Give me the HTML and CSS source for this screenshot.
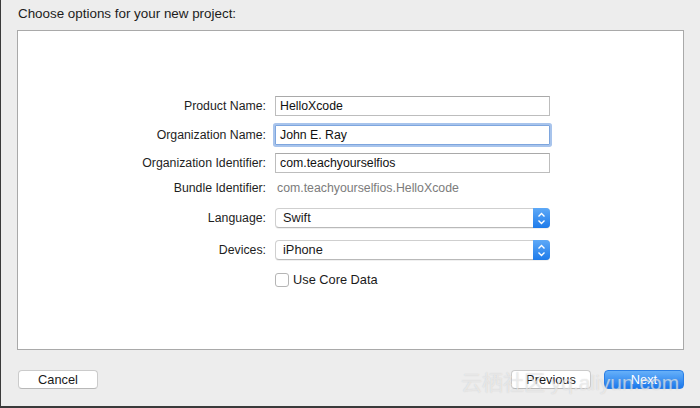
FILE: index.html
```html
<!DOCTYPE html>
<html>
<head>
<meta charset="utf-8">
<link rel="stylesheet" href="styles.css">
</head>
<body>
<div class="window">
  <div class="title">Choose options for your new project:</div>
  <div class="panel">
    <div class="form">
      <div class="row">
        <label class="lbl">Product Name:</label>
        <div class="field">HelloXcode</div>
      </div>
      <div class="row r2">
        <label class="lbl">Organization Name:</label>
        <div class="field focus">John E. Ray</div>
      </div>
      <div class="row r3">
        <label class="lbl">Organization Identifier:</label>
        <div class="field">com.teachyourselfios</div>
      </div>
      <div class="row r4 short">
        <label class="lbl">Bundle Identifier:</label>
        <div class="value">com.teachyourselfios.HelloXcode</div>
      </div>
      <div class="row r5">
        <label class="lbl">Language:</label>
        <div class="popup"><span class="ptext">Swift</span><span class="arrows"><svg width="9" height="13" viewBox="0 0 9 13"><path d="M1.5 4.5 L4.5 1.5 L7.5 4.5 M1.5 8.5 L4.5 11.5 L7.5 8.5" fill="none" stroke="#fff" stroke-width="1.4"/></svg></span></div>
      </div>
      <div class="row r6">
        <label class="lbl">Devices:</label>
        <div class="popup"><span class="ptext">iPhone</span><span class="arrows"><svg width="9" height="13" viewBox="0 0 9 13"><path d="M1.5 4.5 L4.5 1.5 L7.5 4.5 M1.5 8.5 L4.5 11.5 L7.5 8.5" fill="none" stroke="#fff" stroke-width="1.4"/></svg></span></div>
      </div>
      <div class="row r7 short">
        <span></span>
        <div class="check"><span class="box"></span><span>Use Core Data</span></div>
      </div>
    </div>
  </div>
  <div class="footer">
    <button class="btn">Cancel</button>
    <div class="right">
      <button class="btn">Previous</button>
      <button class="btn primary">Next</button>
    </div>
  </div>
  <div class="watermark">云栖社区 yq.aliyun.com</div>
</div>
</body>
</html>
```

FILE: styles.css
```css
html, body {
  margin: 0;
  padding: 0;
}
body {
  width: 700px;
  height: 408px;
  overflow: hidden;
  font-family: "Liberation Sans", Arial, "Noto Sans CJK SC", sans-serif;
  font-size: 12.3px;
  color: #1e1e1e;
}
.window {
  position: relative;
  box-sizing: border-box;
  width: 700px;
  height: 408px;
  background: #ededed;
  border-left: 1px solid #3a3a3a;
  border-bottom: 2px solid #3a3a3a;
  padding: 6px 16px 0 16px;
  display: flex;
  flex-direction: column;
}
.title {
  font-size: 13.4px;
  height: 18px;
  line-height: 16px;
  padding-left: 1px;
  color: #1c1c1c;
}
.panel {
  margin-top: 6px;
  height: 320px;
  box-sizing: border-box;
  background: #fff;
  border: 1px solid #a9a9a9;
  padding-top: 65px;
}
.form {
  display: flex;
  flex-direction: column;
}
.row {
  display: grid;
  grid-template-columns: 248px 275px;
  column-gap: 9px;
  align-items: center;
  height: 20px;
}
.row.short { height: 14px; }
.r2 { margin-top: 9px; }
.r3 { margin-top: 8px; }
.r4 { margin-top: 8px; }
.r5 { margin-top: 13px; }
.r6 { margin-top: 12px; }
.r7 { margin-top: 12px; }
.lbl {
  text-align: right;
  white-space: nowrap;
  color: #1e1e1e;
}
.field {
  box-sizing: border-box;
  height: 20px;
  line-height: 18px;
  border: 1px solid #bdbdbd;
  border-top-color: #a9a9a9;
  background: #fff;
  padding-left: 4px;
  color: #111;
}
.field.focus {
  border-color: #7ea6de;
  box-shadow: 0 0 0 2px #a8c4ec;
  border-radius: 1px;
}
.value {
  padding-left: 2px;
  color: #7c7c7c;
}
.popup {
  box-sizing: border-box;
  height: 20px;
  display: flex;
  align-items: stretch;
  border: 1px solid #cfcfcf;
  border-bottom-color: #b9b9b9;
  border-radius: 4px;
  background: #fff;
  box-shadow: 0 1px 0 rgba(0,0,0,0.06);
}
.ptext {
  flex: 1;
  line-height: 18px;
  padding-left: 7px;
  font-size: 12.8px;
  color: #1a1a1a;
}
.arrows {
  width: 17px;
  margin: -1px -1px -1px 0;
  border-radius: 0 4px 4px 0;
  background: linear-gradient(#5ea9f7, #1e7bea);
  display: flex;
  align-items: center;
  justify-content: center;
}
.check {
  display: flex;
  align-items: center;
  gap: 4px;
  font-size: 12.8px;
  color: #1a1a1a;
}
.box {
  box-sizing: border-box;
  width: 14px;
  height: 14px;
  border: 1px solid #b5b5b5;
  border-radius: 3px;
  background: #fff;
}
.footer {
  margin-top: 20px;
  display: flex;
  justify-content: space-between;
  padding-left: 1px;
}
.right {
  display: flex;
  gap: 13px;
}
.btn {
  width: 80px;
  height: 19px;
  padding: 0;
  margin: 0;
  font-family: "Liberation Sans", Arial, sans-serif;
  font-size: 12.8px;
  color: #1a1a1a;
  background: #fff;
  border: 1px solid #cbcbcb;
  border-bottom-color: #b8b8b8;
  border-radius: 4px;
  line-height: 17px;
}
.btn.primary {
  color: #fff;
  background: linear-gradient(#66b0f9, #1b78ec);
  border-color: #2a7fe6;
}
.watermark {
  position: absolute;
  left: 460px;
  top: 366px;
  font-size: 21px;
  color: rgba(255,255,255,0.55);
  text-shadow: 0 0 1px rgba(150,150,150,0.45);
  white-space: nowrap;
  font-family: "Liberation Sans", "Noto Sans CJK SC", sans-serif;
  pointer-events: none;
}
```
